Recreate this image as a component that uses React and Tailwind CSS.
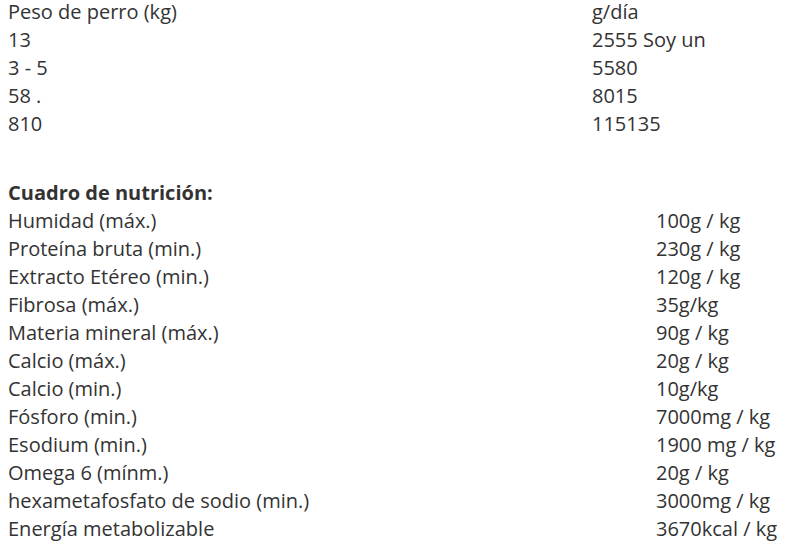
const feeding = [
  ['Peso de perro (kg)', 'g/día'],
  ['13', '2555 Soy un'],
  ['3 - 5', '5580'],
  ['58 .', '8015'],
  ['810', '115135'],
]

const nutrition = [
  ['Humidad (máx.)', '100g / kg'],
  ['Proteína bruta (min.)', '230g / kg'],
  ['Extracto Etéreo (min.)', '120g / kg'],
  ['Fibrosa (máx.)', '35g/kg'],
  ['Materia mineral (máx.)', '90g / kg'],
  ['Calcio (máx.)', '20g / kg'],
  ['Calcio (min.)', '10g/kg'],
  ['Fósforo (min.)', '7000mg / kg'],
  ['Esodium (min.)', '1900 mg / kg'],
  ['Omega 6 (mínm.)', '20g / kg'],
  ['hexametafosfato de sodio (min.)', '3000mg / kg'],
  ['Energía metabolizable', '3670kcal / kg'],
]

export default function App() {
  return (
    <div className="w-[803px] h-[544px] overflow-hidden bg-white text-[#333] text-[20px] leading-[28px] font-['Open_Sans',sans-serif] pl-2 -mt-[2px]">
      {/* Feeding table */}
      <div className="grid grid-cols-[584px_1fr] mb-[41px]">
        {feeding.map(([a, b]) => (
          <div key={a} className="contents">
            <div>{a}</div>
            <div>{b}</div>
          </div>
        ))}
      </div>

      <div className="font-bold">Cuadro de nutrición:</div>

      {/* Nutrition table */}
      <div className="grid grid-cols-[648px_1fr]">
        {nutrition.map(([a, b]) => (
          <div key={a} className="contents">
            <div>{a}</div>
            <div>{b}</div>
          </div>
        ))}
      </div>
    </div>
  )
}
